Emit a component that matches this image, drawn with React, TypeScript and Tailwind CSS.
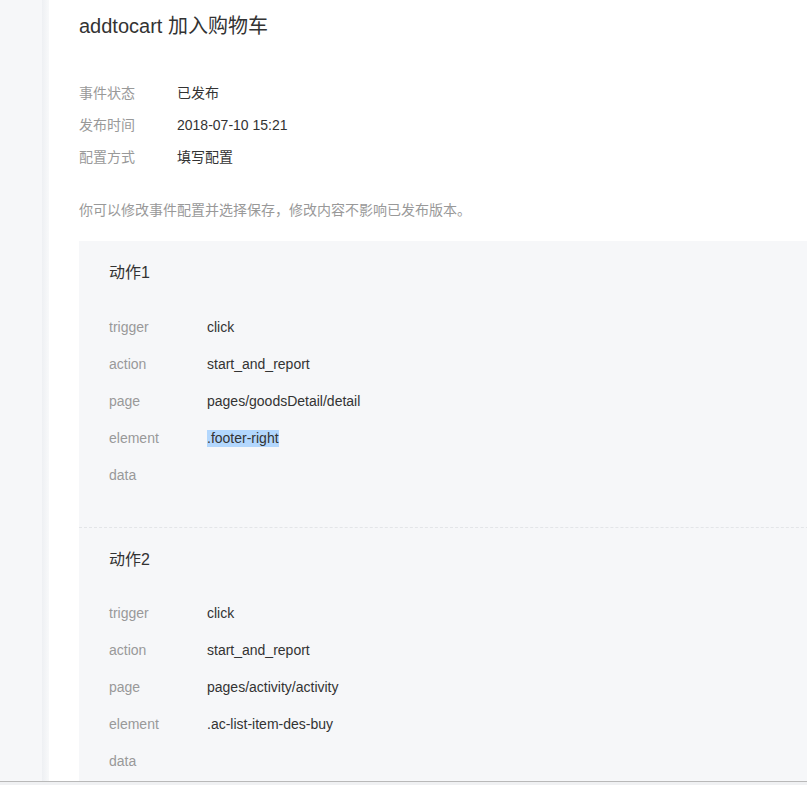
import React from "react";

type Row = { label: string; value: string; selected?: boolean };

const info: Row[] = [
  { label: "事件状态", value: "已发布" },
  { label: "发布时间", value: "2018-07-10 15:21" },
  { label: "配置方式", value: "填写配置" },
];

const actions: { title: string; rows: Row[] }[] = [
  {
    title: "动作1",
    rows: [
      { label: "trigger", value: "click" },
      { label: "action", value: "start_and_report" },
      { label: "page", value: "pages/goodsDetail/detail" },
      { label: "element", value: ".footer-right", selected: true },
      { label: "data", value: "" },
    ],
  },
  {
    title: "动作2",
    rows: [
      { label: "trigger", value: "click" },
      { label: "action", value: "start_and_report" },
      { label: "page", value: "pages/activity/activity" },
      { label: "element", value: ".ac-list-item-des-buy" },
      { label: "data", value: "" },
    ],
  },
];

const App = () => {
  return (
    <div
      className="flex h-[785px] w-[807px] flex-col overflow-hidden bg-white"
      style={{ fontFamily: '"Liberation Sans", "Noto Sans CJK SC", sans-serif' }}
    >
      <div className="flex min-h-0 flex-1">
        <div className="w-[42px] shrink-0 bg-[#f6f7f9]" />
        <div className="w-[7px] shrink-0 bg-gradient-to-r from-[#eef0f3] to-[#f8f9fa]" />

        <div className="min-w-0 flex-1 overflow-hidden pl-[30px]">
          <h1 className="mt-[12px] text-[20px] leading-[28px] text-[#333]">
            addtocart 加入购物车
          </h1>

          <div className="mt-[37px]">
            {info.map((row, i) => (
              <div key={i} className="flex text-[14px] leading-[32px]">
                <span className="w-[98px] text-[#999]">{row.label}</span>
                <span className="text-[#333]">{row.value}</span>
              </div>
            ))}
          </div>

          <p className="mt-[27px] text-[14px] leading-[20px] text-[#999]">
            你可以修改事件配置并选择保存，修改内容不影响已发布版本。
          </p>

          <div className="mt-[21px] w-[760px] bg-[#f6f7f9]">
            {actions.map((act, i) => (
              <div
                key={i}
                className={
                  i === 0
                    ? "border-b border-dashed border-[#e3e5e8] pt-[20px] pb-[33px] pl-[30px]"
                    : "pt-[20px] pb-[32px] pl-[30px]"
                }
              >
                <div className="text-[16px] leading-[24px] text-[#333]">
                  {act.title}
                </div>
                <div className={i === 0 ? "mt-[24px]" : "mt-[23px]"}>
                  {act.rows.map((row, j) => (
                    <div key={j} className="flex h-[37px] items-center text-[14px]">
                      <span className="w-[98px] text-[#999]">{row.label}</span>
                      <span
                        className={
                          row.selected
                            ? "bg-[#b3d7fd] leading-[17px] text-[#333]"
                            : "text-[#333]"
                        }
                      >
                        {row.value}
                      </span>
                    </div>
                  ))}
                </div>
              </div>
            ))}
          </div>
        </div>
      </div>
      <div className="h-[4px] shrink-0 border-t border-[#b9b9b9] bg-[#f0f1f3]" />
    </div>
  );
};

export default App;
